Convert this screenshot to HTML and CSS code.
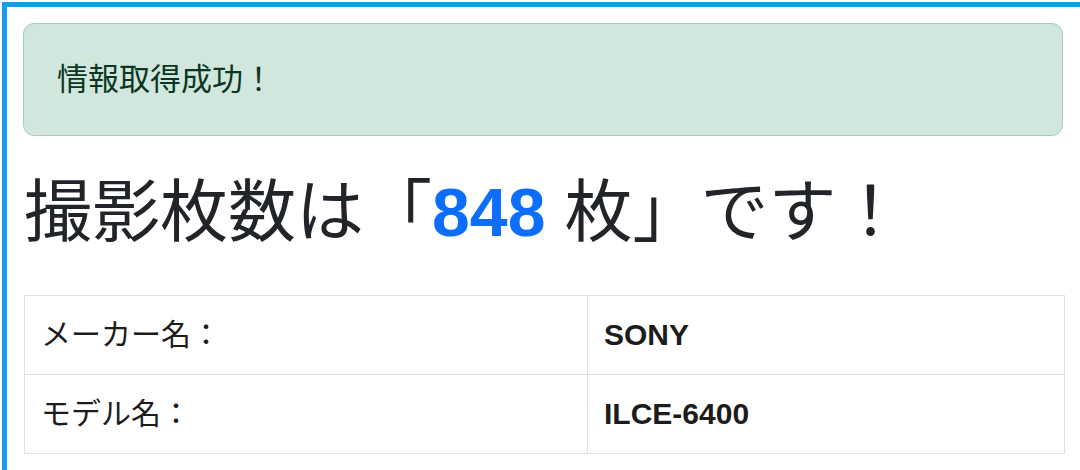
FILE: index.html
```html
<!DOCTYPE html>
<html lang="ja">
<head>
<meta charset="utf-8">
<title>撮影枚数</title>
<link rel="stylesheet" href="styles.css">
</head>
<body>
<main class="frame">
  <div class="alert">情報取得成功！</div>
  <h1 class="count">撮影枚数は「<span class="num">848</span> 枚」です！</h1>
  <table class="info">
    <tr>
      <td class="label">メーカー名：</td>
      <td class="value">SONY</td>
    </tr>
    <tr>
      <td class="label">モデル名：</td>
      <td class="value">ILCE-6400</td>
    </tr>
  </table>
</main>
</body>
</html>
```
FILE: styles.css
```css
html, body {
  margin: 0;
  background: #ffffff;
}

body {
  font-family: "Liberation Sans", "Noto Sans CJK JP", sans-serif;
  color: #212529;
  overflow: hidden;
}

.frame {
  margin: 2px 0 0 2px;
  border-top: 5px solid #179be8;
  border-left: 5px solid #179be8;
  padding: 16px 17px 0 16px;
  height: 470px;
  box-sizing: border-box;
}

.alert {
  background: #d1e7dd;
  border: 1px solid #a3cfbb;
  border-radius: 11px;
  color: #0a3622;
  font-size: 31px;
  line-height: 46px;
  padding: 33px 33px 32px;
}

.count {
  margin: 36px 0 43px 1px;
  font-size: 68px;
  line-height: 80px;
  font-weight: 400;
  color: #212529;
  text-spacing-trim: space-all;
}

.num {
  color: #0d6efd;
  font-weight: 700;
}

.info {
  width: calc(100% + 1px);
  margin-left: 1px;
  border-collapse: collapse;
  font-size: 30px;
}

.info td {
  border: 1px solid #dee2e6;
  padding: 16px 16px;
  line-height: 46px;
  color: #1c1c1c;
}

.info .label {
  width: 530px;
}

.info .value {
  font-weight: 700;
}
```
